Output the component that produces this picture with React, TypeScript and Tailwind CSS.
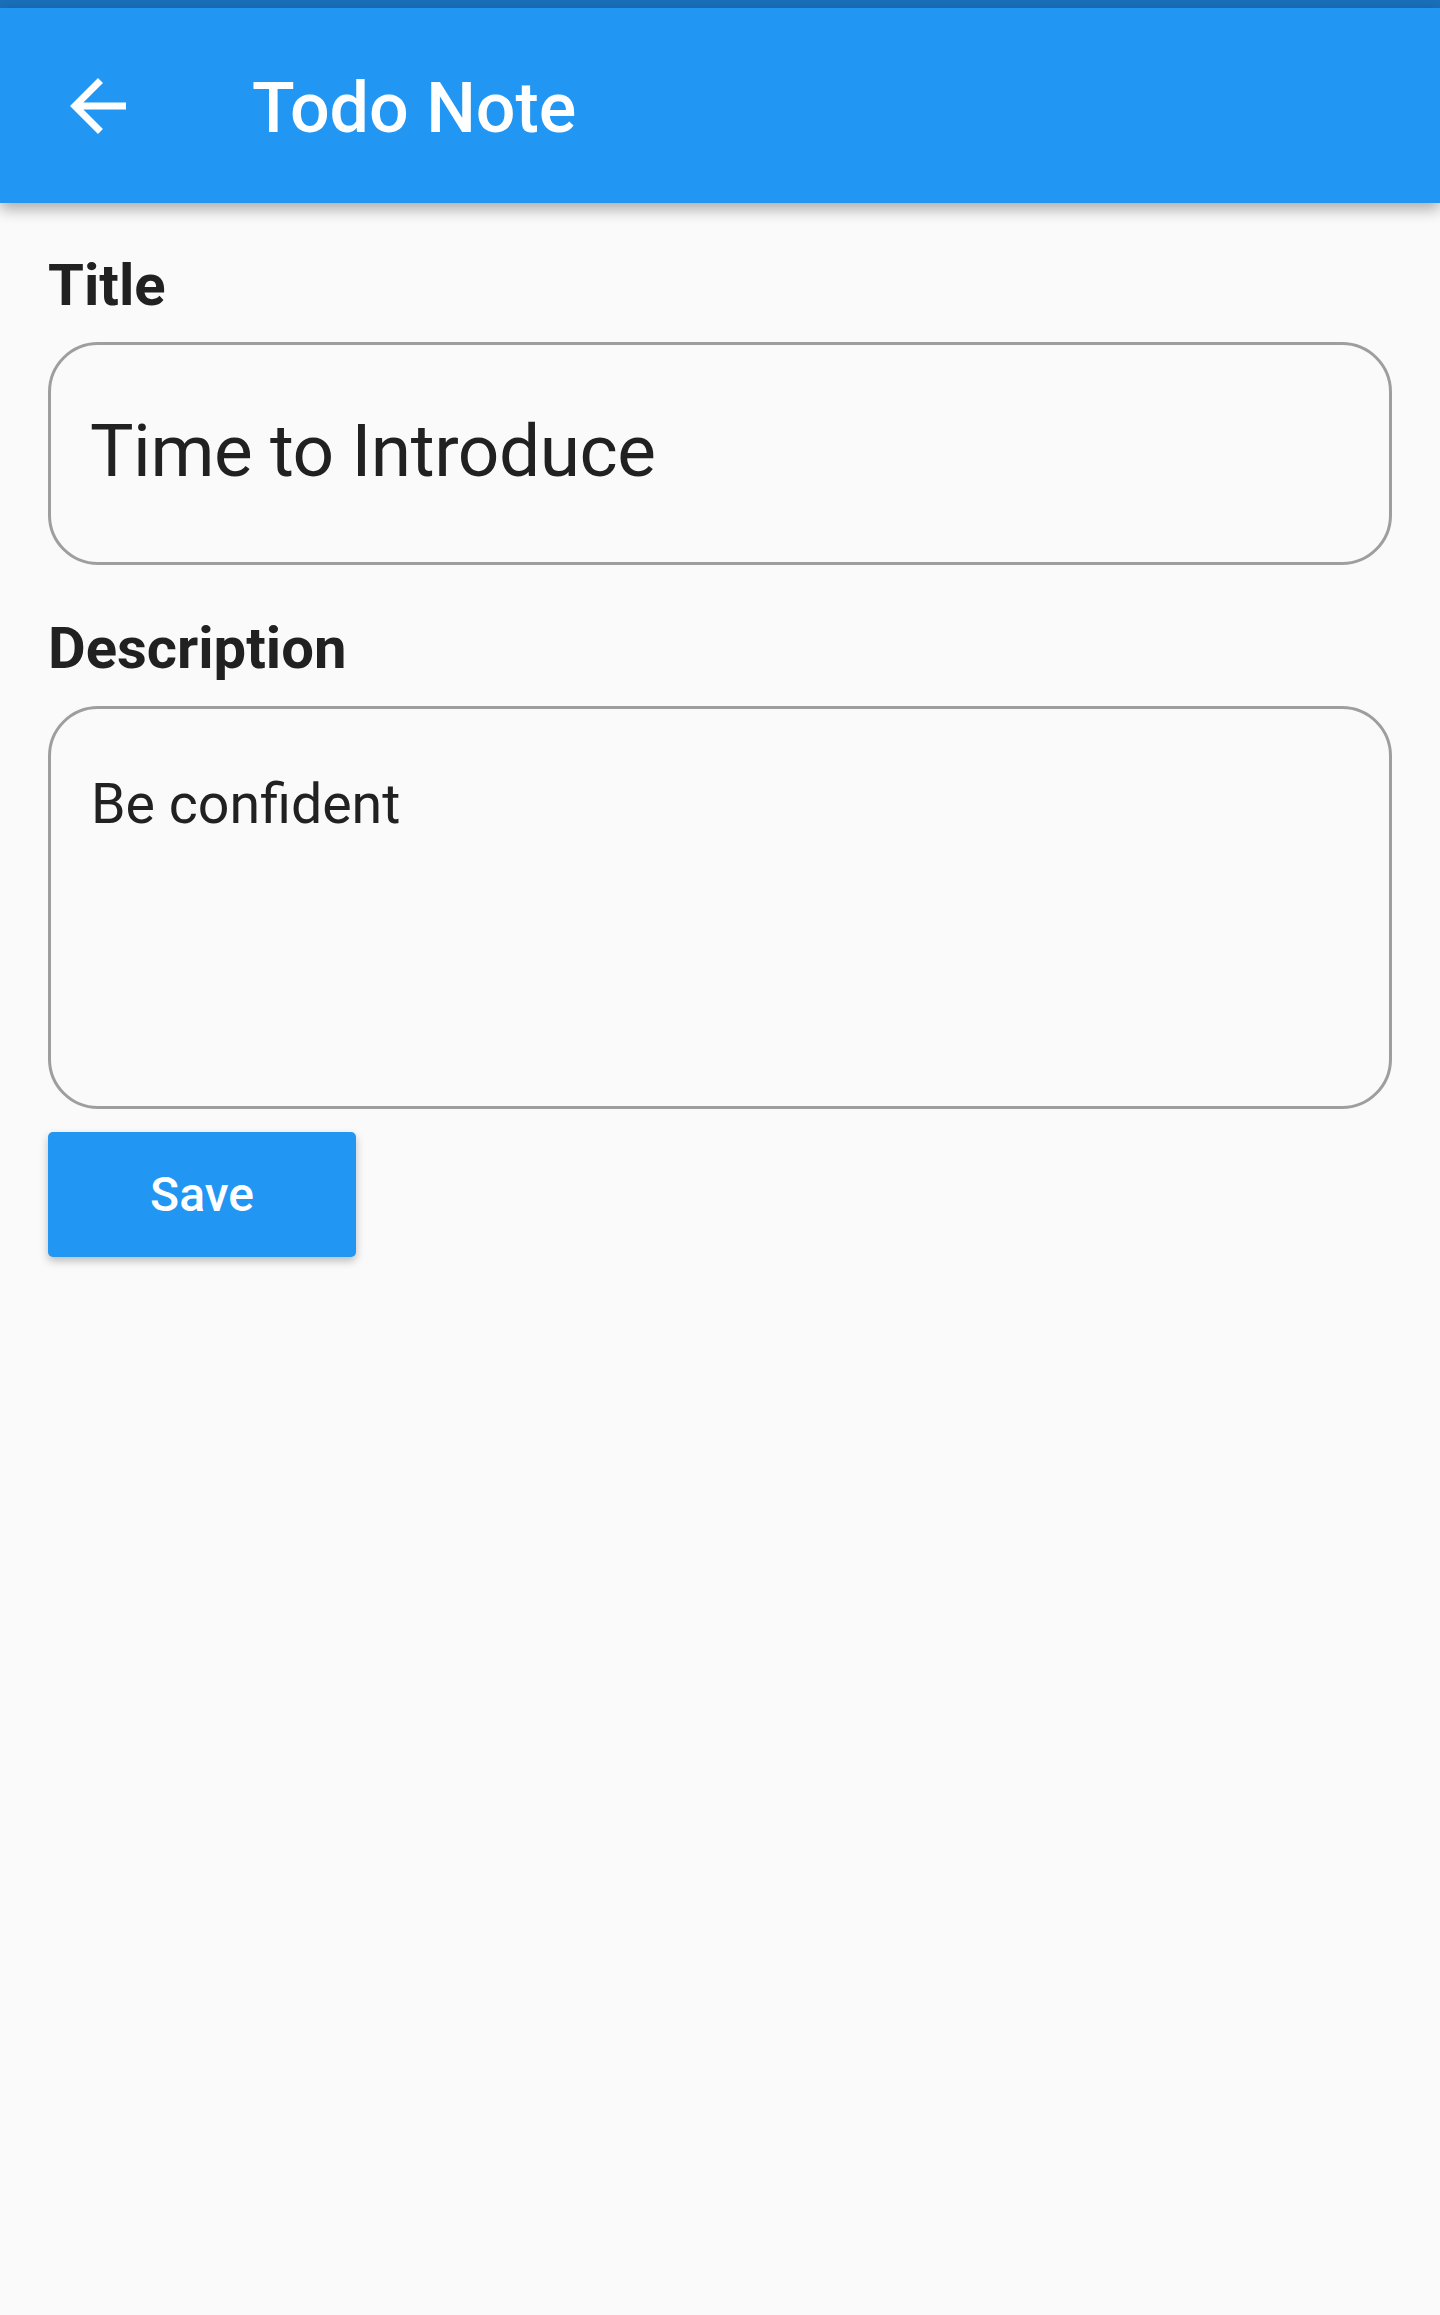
import React from 'react';

function BackArrow() {
  return (
    <svg width="84" height="84" viewBox="0 0 24 24" fill="white" className="shrink-0">
      <path d="M20 11H7.83l5.59-5.59L12 4l-8 8 8 8 1.41-1.41L7.83 13H20v-2z" />
    </svg>
  );
}

export default function App() {
  return (
    <div className="min-h-[2315px] bg-[#fafafa] font-['Roboto',sans-serif] text-[#212121]">
      <div className="h-[8px] bg-[#1a70b9]" />
      <header className="relative z-10 flex h-[195px] items-center bg-[#2196f3] pl-[56px] shadow-[0_6px_14px_rgba(0,0,0,0.32)]">
        <BackArrow />
        <h1 className="ml-[112px] mt-[5px] text-[70px] font-medium leading-none text-white">Todo Note</h1>
      </header>

      <main className="flex flex-col px-[48px]">
        <label className="mt-[53px] text-[58px] font-bold leading-none">Title</label>
        <div className="mt-[28px] h-[223px] rounded-[50px] border-[3px] border-[#9e9e9e] pl-[39px] pt-[70px]">
          <div className="text-[73px] leading-none tracking-[-0.45px]">Time to Introduce</div>
        </div>

        <label className="mt-[54px] text-[58px] font-bold leading-none">Description</label>
        <div className="mt-[29px] h-[403px] rounded-[50px] border-[3px] border-[#9e9e9e] pl-[40px] pt-[68px]">
          <div className="text-[55.5px] leading-none">Be confident</div>
        </div>

        <div className="mt-[23px]">
          <button className="h-[125px] w-[308px] rounded-[5px] bg-[#2196f3] text-[48px] font-medium leading-none text-white shadow-[0_4px_8px_rgba(0,0,0,0.25)]">
            Save
          </button>
        </div>
      </main>
    </div>
  );
}
